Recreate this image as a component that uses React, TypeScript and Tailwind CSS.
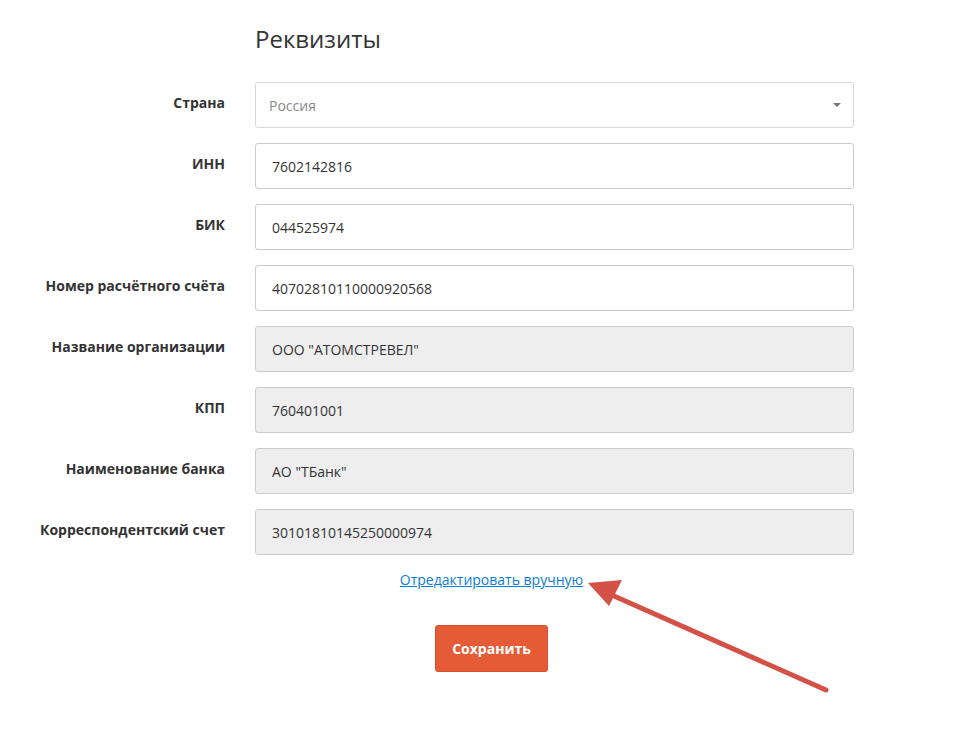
import { ChangeEvent, useState } from 'react';

type Field = {
  label: string;
  value: string;
  readOnly?: boolean;
};

const fields: Field[] = [
  { label: 'ИНН', value: '7602142816' },
  { label: 'БИК', value: '044525974' },
  { label: 'Номер расчётного счёта', value: '40702810110000920568' },
  { label: 'Название организации', value: 'ООО "АТОМСТРЕВЕЛ"', readOnly: true },
  { label: 'КПП', value: '760401001', readOnly: true },
  { label: 'Наименование банка', value: 'АО "ТБанк"', readOnly: true },
  { label: 'Корреспондентский счет', value: '30101810145250000974', readOnly: true },
];

const Row = ({ label, children }: { label: string; children: React.ReactNode }) => (
  <div className="flex gap-[30px]">
    <label className="w-[225px] shrink-0 pt-[11px] text-right text-[14px] leading-5 font-bold text-[#333]">
      {label}
    </label>
    <div className="w-[599px]">{children}</div>
  </div>
);

const App = () => {
  const [values, setValues] = useState(fields.map((f) => f.value));

  const onChange = (i: number) => (e: ChangeEvent<HTMLInputElement>) => {
    const next = [...values];
    next[i] = e.target.value;
    setValues(next);
  };

  return (
    <div className="relative w-[960px] min-h-[732px] bg-white font-['Open_Sans',sans-serif] text-[#333]">
      <div className="pt-[24px]">
        <h1 className="ml-[255px] text-[24px] leading-[30px] font-normal text-[#333]">Реквизиты</h1>

        <div className="mt-[28px] flex flex-col gap-[15px]">
          <Row label="Страна">
            <div className="flex h-[46px] items-center justify-between rounded-[3px] border border-[#d9d9d9] bg-white pl-[13px] pr-[12px]">
              <span className="text-[14px] text-[#888]">Россия</span>
              {/* стрелка селекта */}
              <span className="h-0 w-0 border-x-[4px] border-t-[4px] border-x-transparent border-t-[#777]"></span>
            </div>
          </Row>

          {fields.map((f, i) => (
            <Row key={f.label} label={f.label}>
              <input
                value={values[i]}
                onChange={onChange(i)}
                readOnly={f.readOnly}
                className={`h-[46px] w-full rounded-[3px] border border-[#ccc] px-4 text-[14px] text-[#333] outline-none ${
                  f.readOnly ? 'bg-[#eeeeee]' : 'bg-white'
                }`}
              />
            </Row>
          ))}
        </div>

        <div className="flex flex-col items-center pl-[23px]">
          <a href="#" className="mt-[15px] text-[14px] leading-5 text-[#0b7dd6] underline">
            Отредактировать вручную
          </a>
          <button className="mt-[35px] h-[47px] w-[113px] rounded-[3px] border border-[#d6512d] bg-[#e55b35] text-[14px] font-bold text-white">
            Сохранить
          </button>
        </div>
      </div>

      {/* стрелка-подсказка поверх страницы */}
      <svg className="pointer-events-none absolute left-0 top-0" width="960" height="732">
        <line x1="826" y1="690" x2="605" y2="592" stroke="#d35146" strokeWidth="5" strokeLinecap="round" />
        <polygon points="588,583 622,580 609,606" fill="#d35146" />
      </svg>
    </div>
  );
};

export default App;
